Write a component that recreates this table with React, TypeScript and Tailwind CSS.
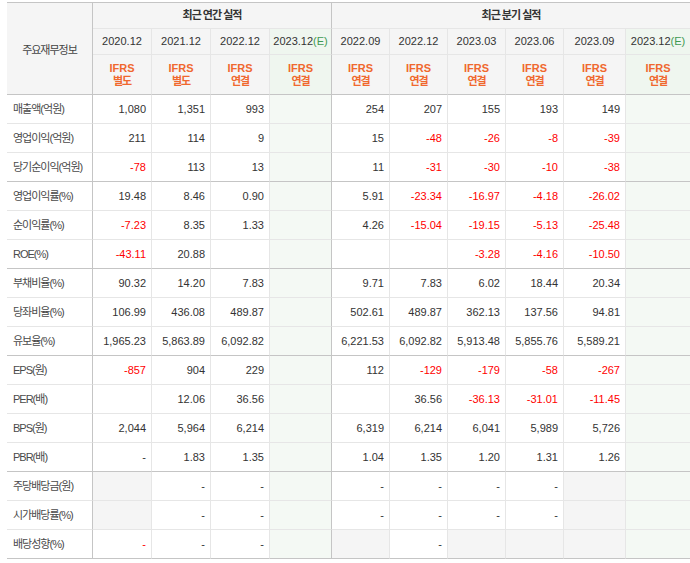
import React from "react";

type V = string | null;

const rows: { label: string; vals: V[] }[] = [
  { label: "매출액(억원)", vals: ["1,080", "1,351", "993", "", "254", "207", "155", "193", "149", ""] },
  { label: "영업이익(억원)", vals: ["211", "114", "9", "", "15", "-48", "-26", "-8", "-39", ""] },
  { label: "당기순이익(억원)", vals: ["-78", "113", "13", "", "11", "-31", "-30", "-10", "-38", ""] },
  { label: "영업이익률(%)", vals: ["19.48", "8.46", "0.90", "", "5.91", "-23.34", "-16.97", "-4.18", "-26.02", ""] },
  { label: "순이익률(%)", vals: ["-7.23", "8.35", "1.33", "", "4.26", "-15.04", "-19.15", "-5.13", "-25.48", ""] },
  { label: "ROE(%)", vals: ["-43.11", "20.88", "", "", "", "", "-3.28", "-4.16", "-10.50", ""] },
  { label: "부채비율(%)", vals: ["90.32", "14.20", "7.83", "", "9.71", "7.83", "6.02", "18.44", "20.34", ""] },
  { label: "당좌비율(%)", vals: ["106.99", "436.08", "489.87", "", "502.61", "489.87", "362.13", "137.56", "94.81", ""] },
  { label: "유보율(%)", vals: ["1,965.23", "5,863.89", "6,092.82", "", "6,221.53", "6,092.82", "5,913.48", "5,855.76", "5,589.21", ""] },
  { label: "EPS(원)", vals: ["-857", "904", "229", "", "112", "-129", "-179", "-58", "-267", ""] },
  { label: "PER(배)", vals: ["", "12.06", "36.56", "", "", "36.56", "-36.13", "-31.01", "-11.45", ""] },
  { label: "BPS(원)", vals: ["2,044", "5,964", "6,214", "", "6,319", "6,214", "6,041", "5,989", "5,726", ""] },
  { label: "PBR(배)", vals: ["-", "1.83", "1.35", "", "1.04", "1.35", "1.20", "1.31", "1.26", ""] },
  { label: "주당배당금(원)", vals: [null, "-", "-", "", "-", "-", "-", "-", null, ""] },
  { label: "시가배당률(%)", vals: [null, "-", "-", "", "-", "-", "-", "-", null, ""] },
  { label: "배당성향(%)", vals: ["-r", "-", "-", "", null, "-", null, null, null, ""] },
];

const groupEnds = new Set([2, 5, 8, 12, 15]);

const annualDates = ["2020.12", "2021.12", "2022.12"];
const annualType = ["별도", "별도", "연결"];
const quarterDates = ["2022.09", "2022.12", "2023.03", "2023.06", "2023.09"];

const font = "font-['Liberation_Sans','Noto_Sans_CJK_KR',sans-serif]";

function Ifrs({ t }: { t: string }) {
  return (
    <div className="flex flex-col items-center font-bold text-[11px] leading-[13px] text-[#f0682e]">
      <span>IFRS</span>
      <span className="tracking-[-1px]">{t}</span>
    </div>
  );
}

export default function App() {
  return (
    <div className={`w-[690px] h-[563px] bg-white pl-[7px] pt-[2px] ${font}`}>
      <div className="grid grid-cols-[86px_59px_59px_59px_62px_58px_58px_58px_58px_62px_64px] grid-rows-[26px_26px_40px_repeat(16,29px)] border-t border-[#c5c5c5] text-[11px] text-[#333]">
        {/* header */}
        <div className="row-span-3 col-start-1 row-start-1 flex items-center justify-center bg-[#f5f5f5] border-r border-b border-r-[#c5c5c5] border-b-[#c5c5c5] tracking-[-1px] text-[#444] pt-[4px]">
          주요재무정보
        </div>
        <div className="col-start-2 col-span-4 row-start-1 flex items-center justify-center bg-[#f5f5f5] border-r border-b border-r-[#c5c5c5] border-b-[#e6e6e6] font-bold tracking-[-1px] text-[#333]">
          최근 연간 실적
        </div>
        <div className="col-start-6 col-span-6 row-start-1 flex items-center justify-center bg-[#f5f5f5] border-b border-b-[#e6e6e6] font-bold tracking-[-1px] text-[#333]">
          최근 분기 실적
        </div>

        {annualDates.map((d) => (
          <div key={d} className="row-start-2 flex items-center justify-center bg-[#f5f5f5] border-r border-b border-[#e6e6e6]">
            {d}
          </div>
        ))}
        <div className="row-start-2 flex items-center justify-center bg-[#eff6ef] border-r border-b border-r-[#c5c5c5] border-b-[#e6e6e6]">
          2023.12<span className="text-[#3f9a52]">(E)</span>
        </div>
        {quarterDates.map((d) => (
          <div key={"q" + d} className="row-start-2 flex items-center justify-center bg-[#f5f5f5] border-r border-b border-[#e6e6e6]">
            {d}
          </div>
        ))}
        <div className="row-start-2 flex items-center justify-center bg-[#eff6ef] border-b border-b-[#e6e6e6]">
          2023.12<span className="text-[#3f9a52]">(E)</span>
        </div>

        {annualType.map((t, i) => (
          <div key={"t" + i} className="row-start-3 flex items-center justify-center bg-[#f5f5f5] border-r border-b border-r-[#e6e6e6] border-b-[#c5c5c5]">
            <Ifrs t={t} />
          </div>
        ))}
        <div className="row-start-3 flex items-center justify-center bg-[#eff6ef] border-r border-b border-r-[#c5c5c5] border-b-[#c5c5c5]">
          <Ifrs t="연결" />
        </div>
        {quarterDates.map((d) => (
          <div key={"qt" + d} className="row-start-3 flex items-center justify-center bg-[#f5f5f5] border-r border-b border-r-[#e6e6e6] border-b-[#c5c5c5]">
            <Ifrs t="연결" />
          </div>
        ))}
        <div className="row-start-3 flex items-center justify-center bg-[#eff6ef] border-b border-b-[#c5c5c5]">
          <Ifrs t="연결" />
        </div>

        {/* body */}
        {rows.map((r, ri) => {
          const end = groupEnds.has(ri);
          const bb = end ? "border-b-[#c5c5c5]" : "border-b-[#e6e6e6]";
          return (
            <React.Fragment key={r.label}>
              <div className={`flex items-center pl-[6px] border-r border-b border-r-[#c5c5c5] ${bb} tracking-[-1px] text-[#4a4a4a]`}>
                {r.label}
              </div>
              {r.vals.map((v, ci) => {
                const isE = ci === 3 || ci === 9;
                const br = ci === 3 ? "border-r border-r-[#c5c5c5]" : ci === 9 ? "" : "border-r border-r-[#e6e6e6]";
                const bg = isE ? "bg-[#f4f9f4]" : v === null ? "bg-[#f5f5f5]" : "bg-white";
                const red = v === "-r" || (v !== null && v.startsWith("-") && v.length > 1);
                const txt = v === "-r" ? "-" : v ?? "";
                return (
                  <div
                    key={ci}
                    className={`flex items-center justify-end pr-[5px] border-b ${bb} ${br} ${bg} ${red ? "text-[#ff0000]" : "text-[#333]"}`}
                  >
                    {isE ? "" : txt}
                  </div>
                );
              })}
            </React.Fragment>
          );
        })}
      </div>
    </div>
  );
}
